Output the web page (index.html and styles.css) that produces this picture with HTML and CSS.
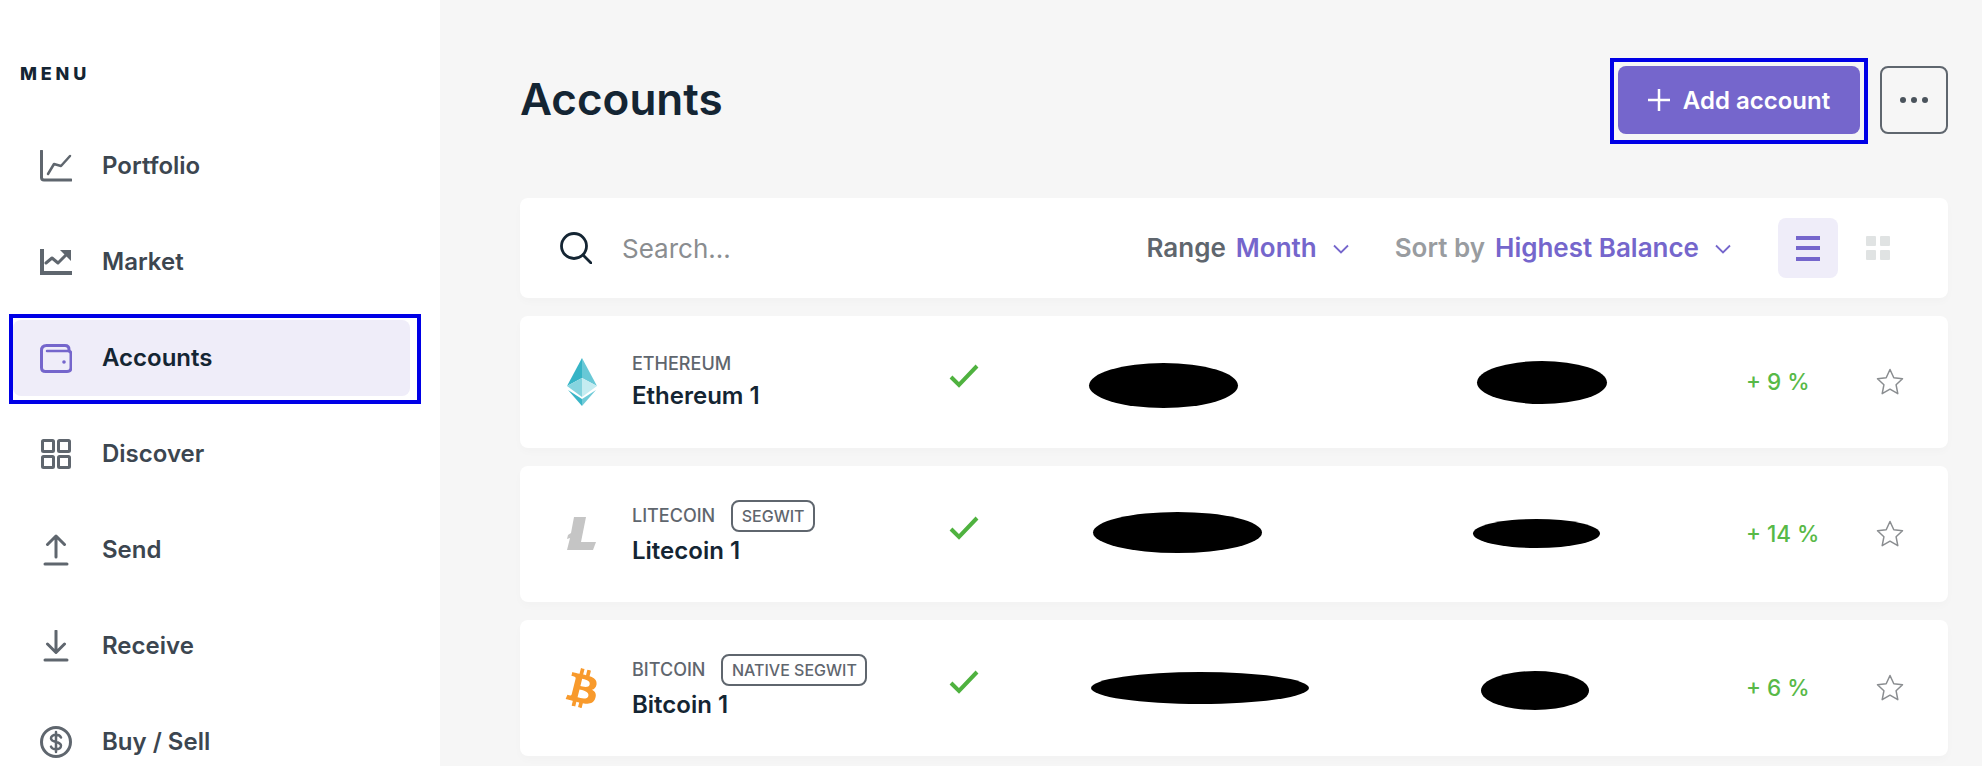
FILE: index.html
```html
<!DOCTYPE html>
<html lang="en">
<head>
<meta charset="utf-8">
<title>Accounts</title>
<link rel="stylesheet" href="styles.css">
</head>
<body>
<aside class="sidebar">
  <h2 class="menu-title">MENU</h2>
  <nav class="nav">
    <a class="nav-item">
      <svg class="nav-icon" viewBox="0 0 32 32"><path class="ico" d="M1.500 1v26.500q0 2.500 2.500 2.500h27"/><path class="ico thin" d="M8 24l6-10 7 2 9-10"/></svg>
      <span>Portfolio</span>
    </a>
    <a class="nav-item">
      <svg class="nav-icon" viewBox="0 0 32 32"><path class="ico-fill" d="M0 3h4v22h28v4H0z"/><path class="ico" d="M6 17l6-5 6 5 8-8"/><path class="ico-fill" d="M20 4h11v11z"/></svg>
      <span>Market</span>
    </a>
    <a class="nav-item active">
      <svg class="nav-icon" viewBox="0 0 32 32"><path class="ico purple" d="M1.500 8.500q0-5 5-5h18.500q4 0 4 4v1.500q2 .5 2 3v13.500q0 4-4 4H5.500q-4 0-4-4z"/><path class="ico purple thin" d="M7 9h22"/><circle class="dot" cx="24" cy="20" r="1.800"/></svg>
      <span>Accounts</span>
    </a>
    <a class="nav-item">
      <svg class="nav-icon" viewBox="0 0 32 32"><rect class="ico" x="2.500" y="2.500" width="11" height="11" rx="1"/><rect class="ico" x="18.500" y="2.500" width="11" height="11" rx="1"/><rect class="ico" x="2.500" y="18.500" width="11" height="11" rx="1"/><rect class="ico" x="18.500" y="18.500" width="11" height="11" rx="1"/></svg>
      <span>Discover</span>
    </a>
    <a class="nav-item">
      <svg class="nav-icon" viewBox="0 0 32 32"><path class="ico" d="M5 30h22M16 23V2M7.500 10.500 16 2l8.500 8.500"/></svg>
      <span>Send</span>
    </a>
    <a class="nav-item">
      <svg class="nav-icon" viewBox="0 0 32 32"><path class="ico" d="M5 30h22M16 1v21M7.500 14 16 22.500 24.500 14"/></svg>
      <span>Receive</span>
    </a>
    <a class="nav-item">
      <svg class="nav-icon" viewBox="0 0 32 32"><circle class="ico" cx="16" cy="16" r="14.500"/><path class="ico thin" d="M21 11.500c-.8-1.800-2.600-2.700-5-2.700-2.700 0-5 1.300-5 3.500 0 5 10 2.500 10 7.500 0 2.200-2.300 3.500-5 3.500-2.500 0-4.300-.9-5-2.700M16 6v20"/></svg>
      <span>Buy / Sell</span>
    </a>
  </nav>
</aside>
<main class="main">
  <header class="header">
    <h1 class="title">Accounts</h1>
    <div class="actions">
      <button class="btn-add"><svg class="plus" viewBox="0 0 22 22"><path d="M11 0v22M0 11h22"/></svg>Add account</button>
      <button class="btn-more"><i></i><i></i><i></i></button>
    </div>
  </header>
  <section class="list">
    <div class="card toolbar">
      <svg class="search-icon" viewBox="0 0 32 32"><circle cx="14" cy="14" r="12.500"/><path d="M23.500 23.500 31 31"/></svg>
      <span class="placeholder">Search...</span>
      <div class="filter range"><span class="f-label">Range</span><span class="f-value">Month</span><svg class="chev" viewBox="0 0 16 10"><path d="M1 1.500 8 8.500l7-7"/></svg></div>
      <div class="filter sort"><span class="f-label muted">Sort by</span><span class="f-value">Highest Balance</span><svg class="chev" viewBox="0 0 16 10"><path d="M1 1.500 8 8.500l7-7"/></svg></div>
      <div class="toggle"><i></i><i></i><i></i></div>
      <div class="grid-btn"><i></i><i></i><i></i><i></i></div>
    </div>

    <article class="card row">
      <svg class="coin" viewBox="0 0 30 48"><polygon fill="#35b4c6" points="15,0 0,28 15,20"/><polygon fill="#68c8d6" points="15,0 30,28 15,20"/><polygon fill="#86d4df" points="0,28 15,20 15,39"/><polygon fill="#c4ecf1" points="30,28 15,20 15,39"/><polygon fill="#39b5c7" points="1,32 15,41 15,48"/><polygon fill="#70cbd8" points="29,32 15,41 15,48"/></svg>
      <div class="info"><div class="kind">ETHEREUM</div><div class="name">Ethereum 1</div></div>
      <svg class="check" viewBox="0 0 30 24"><path d="M2 13l8 8L28 2"/></svg>
      <div class="change">+ 9 %</div>
      <svg class="star" viewBox="0 0 28 27"><path d="M14 1.500l3.800 8.200 8.700 1-6.400 6.100 1.700 8.900-7.800-4.500-7.800 4.500 1.700-8.900-6.400-6.100 8.700-1z"/></svg>
      <span class="blot b1a"></span><span class="blot b1b"></span>
    </article>

    <article class="card row tall">
      <svg class="coin" viewBox="0 0 30 34"><polygon fill="#c5c5c5" points="7,0 19,0 14,25 29,25 26,33 0,33 3,21 0,22 1,18 4,16"/></svg>
      <div class="info"><div class="kind">LITECOIN<span class="tag">SEGWIT</span></div><div class="name">Litecoin 1</div></div>
      <svg class="check" viewBox="0 0 30 24"><path d="M2 13l8 8L28 2"/></svg>
      <div class="change">+ 14 %</div>
      <svg class="star" viewBox="0 0 28 27"><path d="M14 1.500l3.800 8.200 8.700 1-6.400 6.100 1.700 8.900-7.800-4.500-7.800 4.500 1.700-8.900-6.400-6.100 8.700-1z"/></svg>
      <span class="blot b2a"></span><span class="blot b2b"></span>
    </article>

    <article class="card row tall">
      <svg class="coin btc" viewBox="0 0 384 512"><path fill="#f89a2c" d="M310.204 242.638c27.73-14.18 45.377-39.39 41.28-81.3-5.358-57.351-52.458-76.573-114.85-81.929V0h-48.528v77.203c-12.605 0-25.525.315-38.444.63V0h-48.528v79.409c-17.842.539-38.622.276-97.37 0v51.678c38.314-.678 58.417-3.14 63.023 21.427v217.429c-2.925 19.492-18.524 16.685-53.255 16.071L3.765 443.68c88.481 0 97.37.315 97.37.315V512h48.528v-67.06c13.234.315 26.154.315 38.444.315V512h48.528v-68.005c81.299-4.412 135.647-24.894 142.895-101.467 5.671-61.446-23.32-88.862-69.326-99.89zM150.608 134.553c27.415 0 113.126-8.507 113.126 48.528 0 54.515-85.71 48.212-113.126 48.212v-96.74zm0 251.776V279.821c32.772 0 133.127-9.138 133.127 53.255-.001 60.186-100.355 53.253-133.127 53.253z"/></svg>
      <div class="info"><div class="kind">BITCOIN<span class="tag">NATIVE SEGWIT</span></div><div class="name">Bitcoin 1</div></div>
      <svg class="check" viewBox="0 0 30 24"><path d="M2 13l8 8L28 2"/></svg>
      <div class="change">+ 6 %</div>
      <svg class="star" viewBox="0 0 28 27"><path d="M14 1.500l3.800 8.200 8.700 1-6.400 6.100 1.700 8.900-7.800-4.500-7.800 4.500 1.700-8.900-6.400-6.100 8.700-1z"/></svg>
      <span class="blot b3a"></span><span class="blot b3b"></span>
    </article>
  </section>
</main>
</body>
</html>
```
FILE: styles.css
```css
* { box-sizing: border-box; }
html, body { margin: 0; height: 100%; }
body {
  display: flex;
  height: 766px;
  overflow: hidden;
  background: #f6f6f6;
  font-family: Inter, "Liberation Sans", sans-serif;
  color: #142533;
}

/* Sidebar */
.sidebar {
  width: 440px;
  flex: none;
  background: #fff;
  padding: 63px 30px 0 13px;
}
.menu-title {
  margin: 0 0 42.500px 7px;
  font-size: 18px;
  line-height: 22px;
  font-weight: 800;
  letter-spacing: 3.800px;
}
.nav { display: flex; flex-direction: column; gap: 20px; }
.nav-item {
  position: relative;
  display: flex;
  align-items: center;
  height: 76px;
  padding-left: 27px;
  gap: 30px;
  border-radius: 8px;
  font-size: 24px;
  font-weight: 600;
  color: #3c4650;
}
.nav-icon { width: 32px; height: 32px; flex: none; }
.ico { fill: none; stroke: #5f666e; stroke-width: 3; stroke-linecap: round; stroke-linejoin: round; }
.ico.thin { stroke-width: 2.500; }
.ico.purple { stroke: #7566cc; }
.ico-fill { fill: #5f666e; }
.dot { fill: #7566cc; }
.nav-item.active { background: #efedf9; color: #142533; }
.nav-item.active::after {
  content: "";
  position: absolute;
  inset: -6px -11px -8.500px -4px;
  border: 4px solid #0000e6;
}

/* Main */
.main { flex: 1; padding: 66px 34px 0 80px; }
.header {
  display: flex;
  justify-content: space-between;
  align-items: center;
  height: 68px;
  margin-bottom: 64px;
}
.title { margin: 0 0 2px; font-size: 44px; font-weight: 600; line-height: 64px; }
.actions { display: flex; gap: 20px; }
.btn-add {
  position: relative;
  width: 242px;
  height: 68px;
  display: flex;
  align-items: center;
  justify-content: center;
  gap: 13px;
  border: 0;
  border-radius: 8px;
  background: #7566cc;
  color: #fff;
  font: 600 24px Inter, "Liberation Sans", sans-serif;
}
.btn-add::after {
  content: "";
  position: absolute;
  inset: -8px -8px -10px -8px;
  border: 4px solid #0000e6;
}
.plus { width: 22px; height: 22px; fill: none; stroke: #fff; stroke-width: 2.500; }
.btn-more {
  width: 68px;
  height: 68px;
  display: flex;
  align-items: center;
  justify-content: center;
  gap: 5px;
  background: transparent;
  border: 2px solid #5f666e;
  border-radius: 8px;
}
.btn-more i { width: 6px; height: 6px; border-radius: 50%; background: #4a535c; }

.list { display: flex; flex-direction: column; gap: 17.600px; }
.card {
  position: relative;
  background: #fff;
  border-radius: 8px;
  box-shadow: 0 4px 8px rgba(0, 0, 0, .02);
}

/* Toolbar */
.toolbar {
  height: 100px;
  display: flex;
  align-items: center;
  padding: 0 58px 0 40px;
}
.search-icon { width: 32px; height: 32px; fill: none; stroke: #142533; stroke-width: 2.800; stroke-linecap: round; }
.placeholder { margin-left: 30px; font-size: 26px; color: #8a8d90; }
.filter { display: flex; align-items: center; font-size: 26px; font-weight: 600; margin-bottom: 2px; }
.range { margin-left: auto; }
.sort { margin-left: 46px; }
.f-label { color: #5f666e; }
.f-label.muted { color: #999ca0; }
.f-value { color: #7566cc; margin-left: 10px; }
.chev { width: 16px; height: 10px; margin-left: 16px; margin-top: 4px; fill: none; stroke: #7566cc; stroke-width: 1.800; }
.toggle {
  width: 60px;
  height: 60px;
  margin-left: 47px;
  display: flex;
  flex-direction: column;
  align-items: center;
  justify-content: center;
  gap: 6.500px;
  border-radius: 8px;
  background: #efedf9;
}
.toggle i { width: 24px; height: 4px; background: #7566cc; }
.grid-btn {
  width: 24px;
  margin-left: 28px;
  display: grid;
  grid-template-columns: 10px 10px;
  gap: 4px;
}
.grid-btn i { height: 10px; border-radius: 1px; background: #e0e3e3; }

/* Rows */
.row {
  height: 132.400px;
  display: grid;
  grid-template-columns: 65px 317px 797px 130px auto;
  align-items: center;
  padding-left: 47px;
}
.row.tall { height: 136.500px; }
.coin { width: 30px; height: 48px; }
.row.tall .coin { height: 34px; }
.row.tall .coin.btc { height: 39px; transform: rotate(14deg); margin: 1px 0 0 1px; }
.info { margin-bottom: 4px; }
.row.tall .info { margin-bottom: 1px; }
.row.tall .name { margin-top: 3px; }
.kind {
  display: flex;
  align-items: center;
  height: 32px;
  font-size: 18px;
  font-weight: 500;
  color: #5f666e;
}
.tag {
  margin-left: 16px;
  height: 32px;
  padding: 0 8.500px;
  display: flex;
  align-items: center;
  border: 2px solid #5f666e;
  border-radius: 8px;
  font-size: 16px;
  font-weight: 500;
}
.name { font-size: 24px; line-height: 32px; font-weight: 600; color: #142533; }
.check { width: 30px; height: 24px; margin-bottom: 12px; fill: none; stroke: #4fb23f; stroke-width: 4; }
.change { font-size: 22.500px; font-weight: 500; color: #58b947; margin-bottom: 1px; }
.star { width: 28px; height: 27px; fill: none; stroke: #8a8d90; stroke-width: 1.500; stroke-linejoin: round; }

/* Redaction blots over the balance columns */
.blot { position: absolute; background: #000; border-radius: 50%; }
.b1a { left: 569px; top: 47px; width: 149px; height: 45px; }
.b1b { left: 957px; top: 45px; width: 130px; height: 43px; }
.b2a { left: 573px; top: 46px; width: 169px; height: 41px; }
.b2b { left: 953px; top: 53px; width: 127px; height: 29px; }
.b3a { left: 571px; top: 52px; width: 218px; height: 32px; }
.b3b { left: 961px; top: 51px; width: 108px; height: 39px; }
```
